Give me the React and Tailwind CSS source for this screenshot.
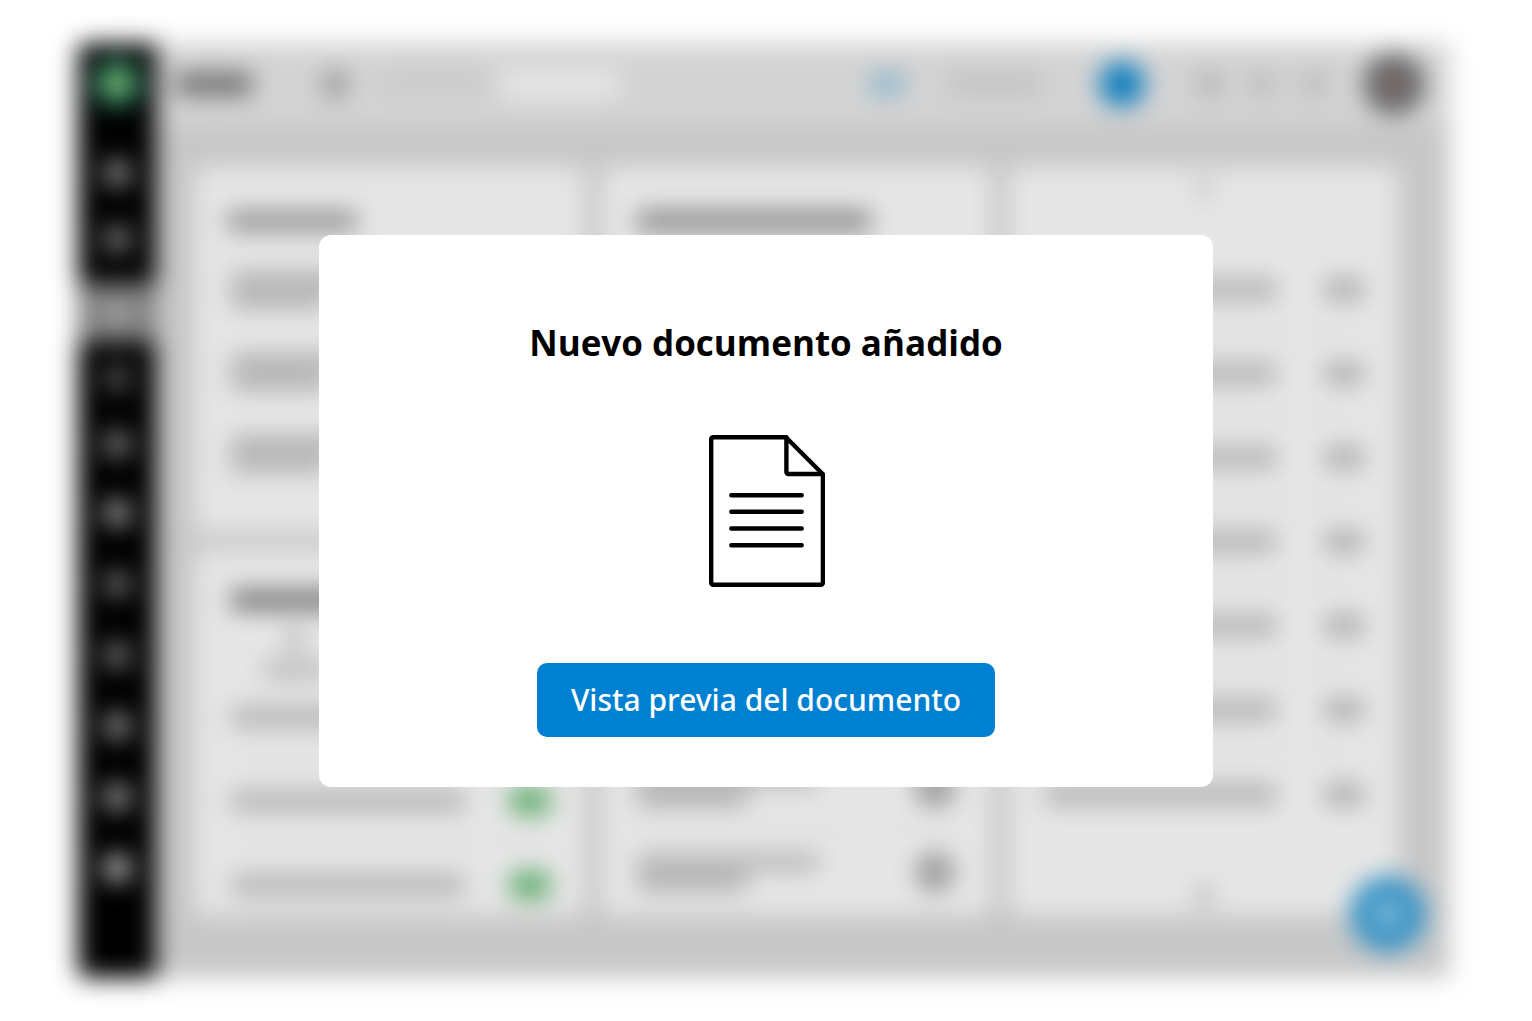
import React from "react";

const NAV_ITEMS = [
  { slot: "h-[66px]", tone: "bg-[#8c8c8c]" },
  { slot: "h-[66px]", tone: "bg-[#7c7c7c]" },
  { slot: "mt-[11px] mb-[3px] h-[59px] bg-[#808080]", tone: "bg-[#a0a0a0]" },
  { slot: "h-[66px]", tone: "bg-[#545454]" },
  { slot: "h-[66px]", tone: "bg-[#7c7c7c]" },
  { slot: "h-[71px]", tone: "bg-[#9c9c9c]" },
  { slot: "h-[71px]", tone: "bg-[#6c6c6c]" },
  { slot: "h-[71px]", tone: "bg-[#747474]" },
  { slot: "h-[71px]", tone: "bg-[#8c8c8c]" },
  { slot: "h-[71px]", tone: "bg-[#989898]" },
  { slot: "h-[71px]", tone: "bg-[#c0c0c0]" },
];

function Sidebar() {
  return (
    <div className="flex w-[78px] shrink-0 flex-col items-center rounded-l-lg bg-black">
      <div className="mt-4 mb-[33px] grid size-12 place-items-center rounded-full bg-[#1d7a66]">
        <div className="size-7 rounded-full bg-[#84b466]" />
      </div>
      {NAV_ITEMS.map(({ slot, tone }, i) => (
        <div key={i} className={`grid w-full place-items-center ${slot}`}>
          <div className={`size-7 rounded-full ${tone}`} />
        </div>
      ))}
    </div>
  );
}

function TopBar() {
  return (
    <div className="flex h-[82px] items-center rounded-tr-lg bg-[#d3d3d3] pr-[26px] pl-5">
      <div className="h-[22px] w-[76px] rounded bg-[#6c6c6c]" />
      <div className="ml-[72px] h-6 w-[22px] rounded bg-[#909090]" />
      <div className="ml-9 h-5 w-[108px] bg-[#c9c9c9]" />
      <div className="ml-2 h-8 w-[122px] rounded bg-[#e4e4e4]" />
      <div className="ml-auto h-5 w-[34px] rounded bg-[#84b4cc]" />
      <div className="ml-[44px] h-5 w-[92px] bg-[#c1c1c1]" />
      <div className="ml-[59px] size-[46px] rounded-full bg-[#1280be]" />
      <div className="ml-[53px] size-6 bg-[#b5b5b5]" />
      <div className="ml-7 size-6 bg-[#bbbbbb]" />
      <div className="ml-7 size-6 bg-[#bbbbbb]" />
      <div className="ml-[38px] grid size-[60px] place-items-center rounded-full bg-[#5b5f61]">
        <div className="size-6 rounded-full bg-[#947470]" />
      </div>
    </div>
  );
}

function Card({ className = "", children }) {
  return (
    <div className={`flex flex-col overflow-hidden rounded-lg bg-[#e6e6e6] ${className}`}>
      {children}
    </div>
  );
}

function RecentCard() {
  return (
    <Card className="flex-1 px-8">
      <div className="h-[82px] pt-11">
        <div className="h-5 w-[130px] bg-[#929292]" />
      </div>
      {[0, 1, 2].map((i) => (
        <div key={i} className="flex h-[82px] flex-col justify-center gap-1 pl-1">
          <div className="h-4 w-[180px] bg-[#acacac]" />
          <div className="h-4 w-[96px] bg-[#acacac]" />
        </div>
      ))}
    </Card>
  );
}

function RegistryCard() {
  return (
    <Card className="flex-1 pr-8 pl-9">
      <div className="h-[125px] pt-10">
        <div className="h-5 w-[150px] bg-[#747474]" />
        <div className="ml-8 flex w-16 flex-col items-center gap-3 pt-5">
          <div className="size-5 rounded-full bg-[#acacac]" />
          <div className="h-4 w-full bg-[#b4b4b4]" />
        </div>
      </div>
      <div className="divide-y divide-[#b8b8b8]">
        {[0, 1, 2].map((i) => (
          <div key={i} className="flex h-[84px] items-center justify-between last:h-[70px] last:pt-3.5">
            <div className="h-[22px] w-[234px] bg-[#b6b6b6]" />
            <div className="h-[28px] w-[44px] rounded-full bg-[#62ac6e]" />
          </div>
        ))}
      </div>
    </Card>
  );
}

function NotesCard() {
  return (
    <Card className="pr-9 pl-[35px]">
      <div className="h-[75px] pt-[43px]">
        <div className="h-[22px] w-[234px] bg-[#8e8e8e]" />
      </div>
      <div className="divide-y divide-[#b8b8b8]">
        {Array.from({ length: 8 }, (_, i) => (
          <div key={i} className="flex h-[84px] items-center justify-between">
            <div className="flex flex-col gap-1">
              <div className="h-4 w-[182px] bg-[#b0b0b0]" />
              <div className="h-4 w-[110px] bg-[#a9a9a9]" />
            </div>
            <div className="size-10 rounded-full bg-[#9c9c9c]" />
          </div>
        ))}
      </div>
    </Card>
  );
}

function ListCard() {
  return (
    <Card>
      <div className="flex h-[81px] justify-center pt-3">
        <div className="size-5 rounded-full bg-[#c4c4c4]" />
      </div>
      <div className="divide-y divide-[#b8b8b8] pr-[34px] pl-9">
        {Array.from({ length: 7 }, (_, i) => (
          <div key={i} className="flex h-[84px] items-center justify-between">
            <div className="h-[23px] w-[232px] bg-[#b6b6b6]" />
            <div className="h-[23px] w-[40px] rounded bg-[#afafaf]" />
          </div>
        ))}
      </div>
      <div className="mt-auto flex justify-center pb-2.5">
        <div className="size-5 rounded-full bg-[#b8b8b8]" />
      </div>
    </Card>
  );
}

function Backdrop() {
  return (
    <div aria-hidden="true" className="relative flex flex-1 blur-md">
      <Sidebar />
      <div className="flex min-w-0 flex-1 flex-col rounded-r-lg bg-[#c7c7c7]">
        <TopBar />
        <div className="grid flex-1 grid-cols-3 gap-[18px] pt-[42px] pr-[52px] pb-[63px] pl-[39px]">
          <div className="flex flex-col gap-[18px]">
            <RecentCard />
            <RegistryCard />
          </div>
          <NotesCard />
          <ListCard />
        </div>
      </div>
      <div className="absolute right-6 bottom-[26px] grid size-[76px] place-items-center rounded-full bg-[#3592c4]">
        <div className="size-5 rounded-full bg-[#cce4f0]" />
      </div>
    </div>
  );
}

function DocumentIcon() {
  return (
    <svg
      aria-hidden="true"
      width="118"
      height="154"
      viewBox="0 0 118 154"
      fill="none"
      stroke="#000"
      strokeWidth="4.4"
      strokeLinecap="round"
      strokeLinejoin="round"
    >
      <path d="M6.200 3.200h72.700l37 37v108.600a2 2 0 0 1-2 2H6.200a2 2 0 0 1-2-2V5.200a2 2 0 0 1 2-2z" />
      <path d="M79.400 3.200v34.800a2 2 0 0 0 2 2h34" />
      <path d="M24.300 61.200h70.400M24.300 77.800h70.400M24.300 94.500h70.400M24.300 111.200h70.400" />
    </svg>
  );
}

export default function App() {
  return (
    <main className="flex min-h-screen flex-col bg-white py-[43px] pr-[82px] pl-[78px] font-['Noto_Sans','Open_Sans',sans-serif]">
      <Backdrop />
      <div className="fixed inset-0 grid place-items-center">
        <section
          role="dialog"
          aria-modal="true"
          aria-labelledby="dialog-title"
          className="flex w-full max-w-[894px] flex-col items-center rounded-xl bg-white pt-[84px] pb-[50px]"
        >
          <h1
            id="dialog-title"
            className="font-['Open_Sans','Noto_Sans',sans-serif] text-[35px] leading-[48px] font-bold text-black"
          >
            Nuevo documento añadido
          </h1>
          <div className="mt-[67px] mb-[75px]">
            <DocumentIcon />
          </div>
          <button
            type="button"
            className="h-[74px] cursor-pointer rounded-[10px] bg-[#0080d0] px-[34px] text-[30px] leading-10 font-medium text-white"
          >
            Vista previa del documento
          </button>
        </section>
      </div>
    </main>
  );
}
